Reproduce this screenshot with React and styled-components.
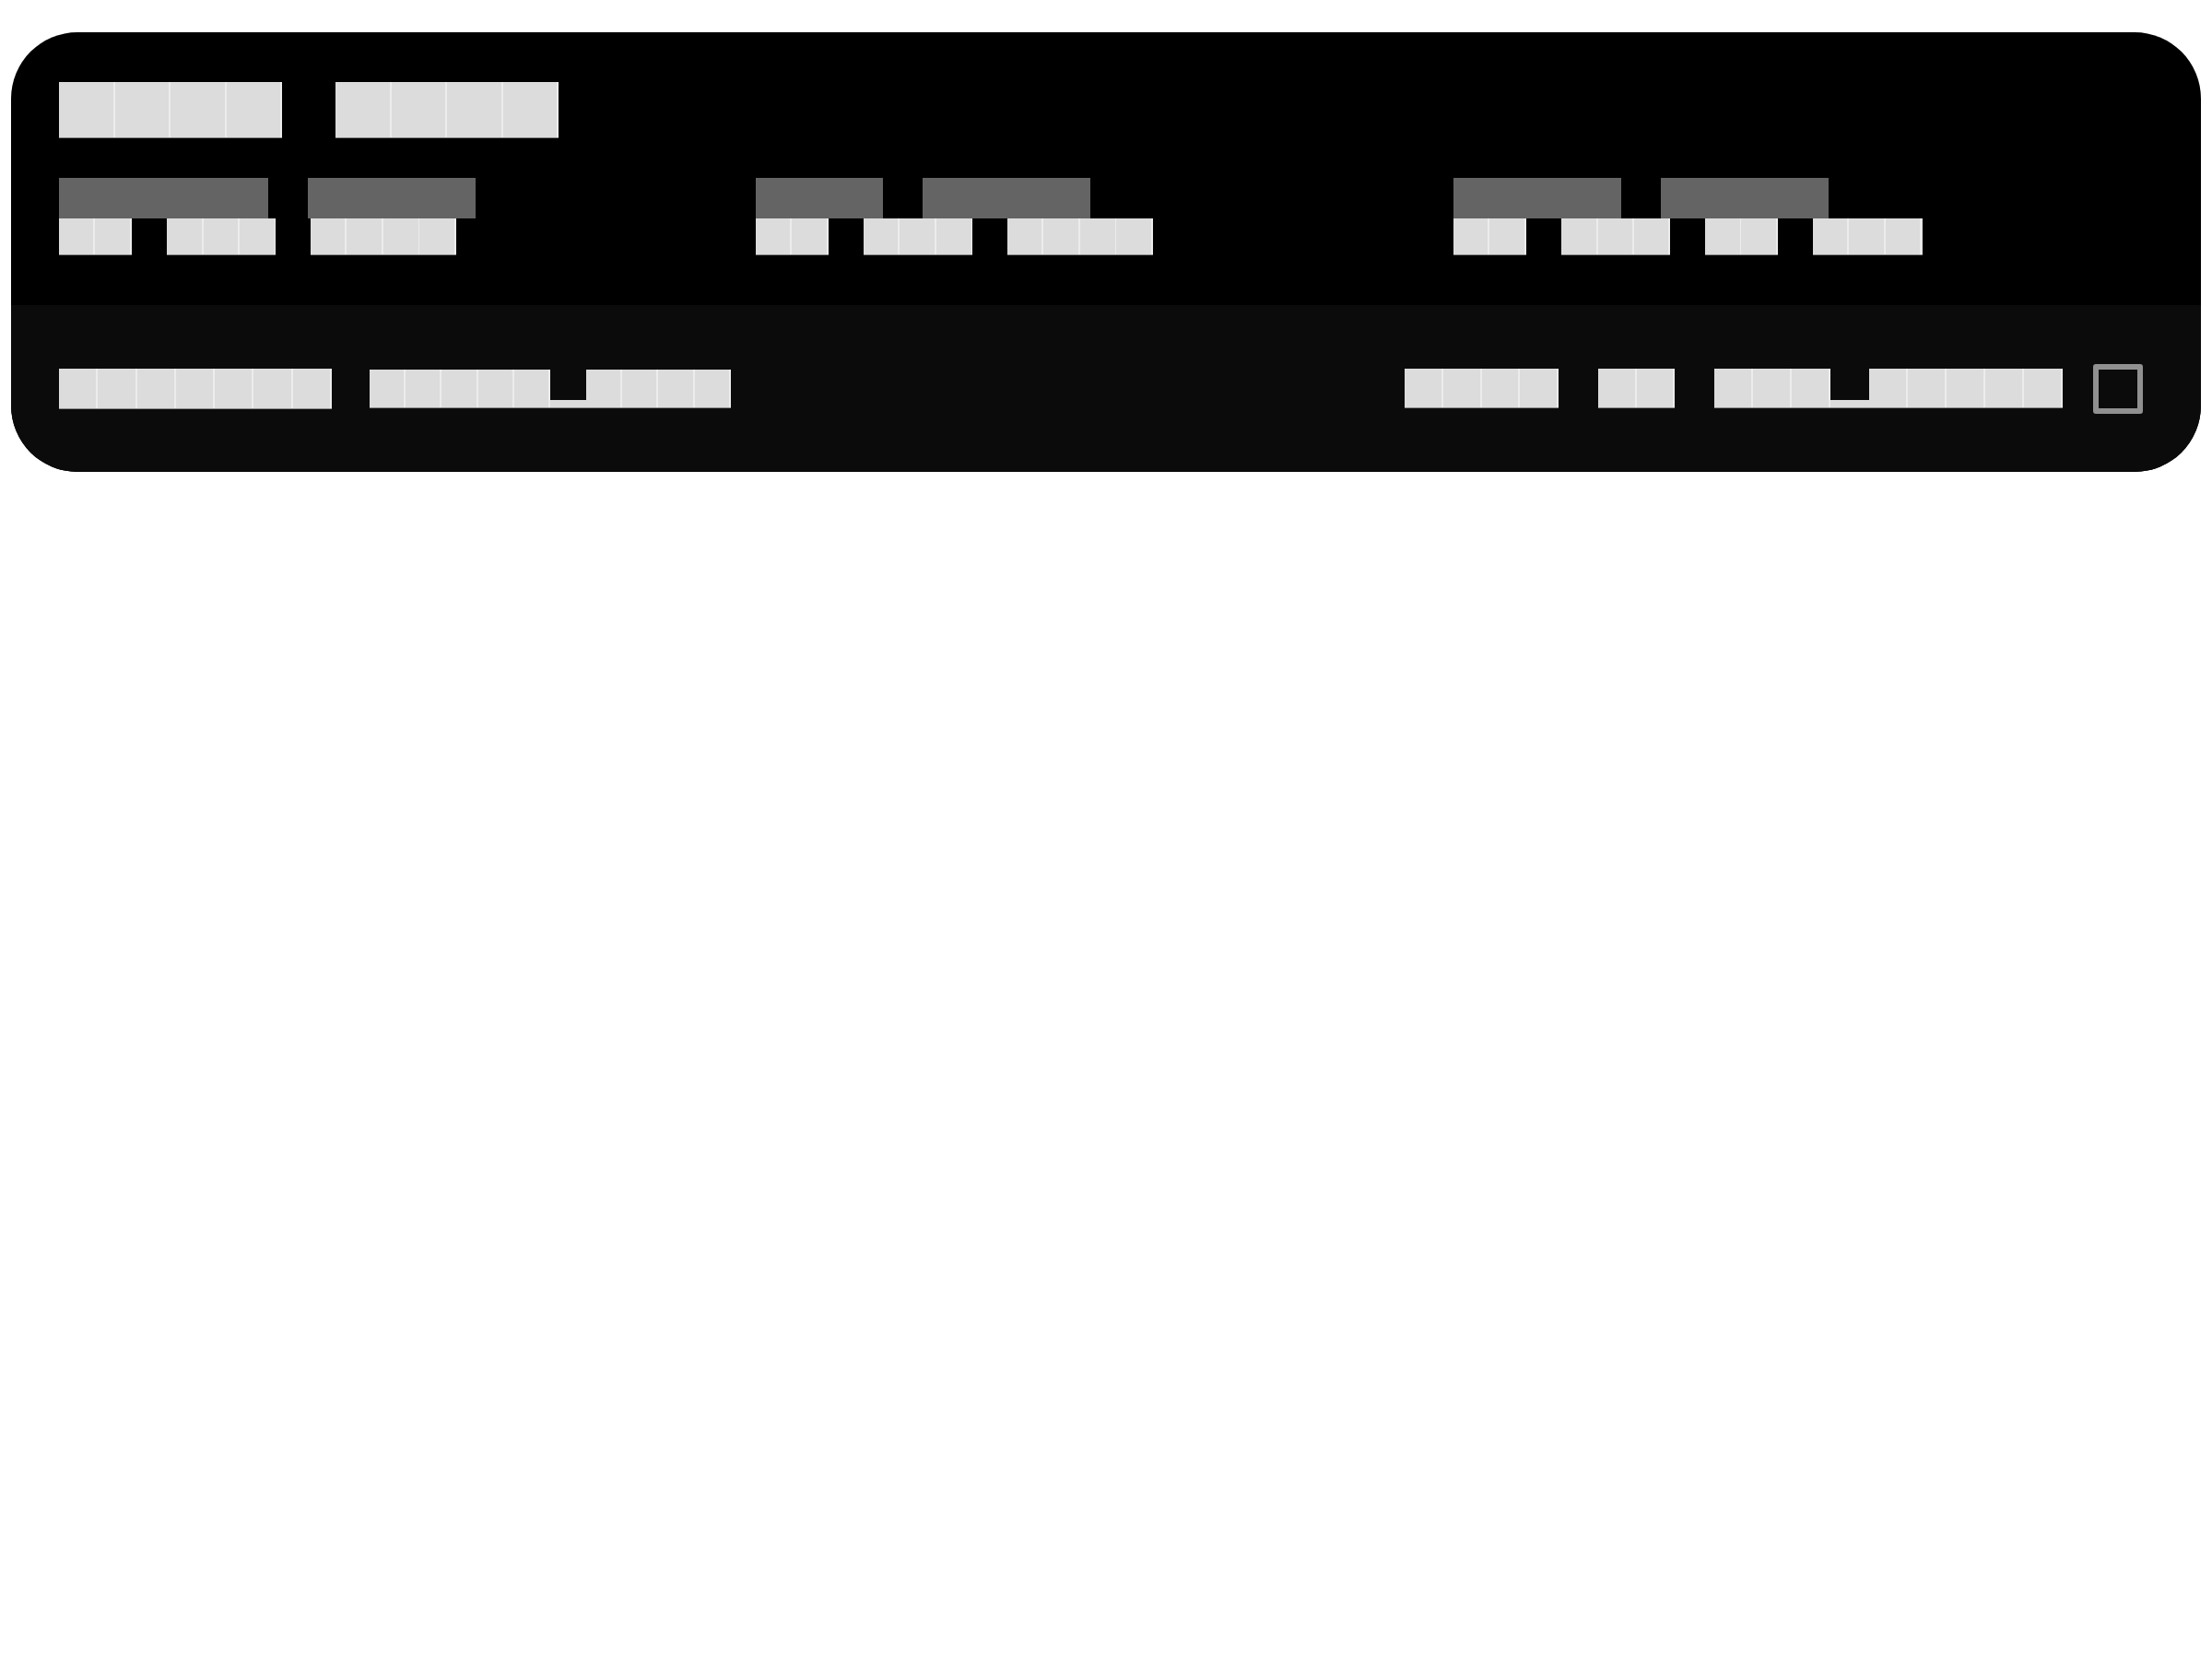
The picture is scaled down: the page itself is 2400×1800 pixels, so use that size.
import styled, { createGlobalStyle } from "styled-components";

const GlobalStyle = createGlobalStyle`
  * { box-sizing: border-box; }
  html, body { margin: 0; padding: 0; background: #fff; }
  body { font-family: "Noto Sans CJK SC", "Noto Sans", sans-serif; }
`;

const headings = ["关于我们", "联系我们"];

const groups = [
  { labels: [227, 182], links: ["首页", "新产品", "解决方案"] },
  { labels: [138, 182], links: ["招聘", "合作者", "投资关系"] },
  { labels: [182, 182], links: ["帮助", "退换货", "隐私", "网站图"] },
];

const Footer = () => {
  return (
    <Card>
      <Top>
        <HeadingRow>
          {headings.map((h) => (
            <Word key={h} $size={60.5} $height={61}>{h}</Word>
          ))}
        </HeadingRow>
        <Columns>
          {groups.map((g, i) => (
            <Group key={i}>
              <LabelRow>
                {g.labels.map((w, j) => (
                  <Label key={j} $width={w}>栏目</Label>
                ))}
              </LabelRow>
              <LinkRow>
                {g.links.map((l) => (
                  <Word as="a" key={l} $size={39.5} $height={40}>{l}</Word>
                ))}
              </LinkRow>
            </Group>
          ))}
        </Columns>
      </Top>
      <Bottom>
        <BottomSide>
          <Word $size={42.3} $height={44}>版权所有公司名</Word>
          <Phrase>
            <Word $size={39.2} $height={42}>沪公网安备</Word>
            <Gap $size={39.2} />
            <Word $size={39.2} $height={42}>号码编号</Word>
          </Phrase>
        </BottomSide>
        <BottomSide $right>
          <Word as="a" $size={41.8} $height={43}>使用条款</Word>
          <Word as="a" $size={41.6} $height={43}>隐私</Word>
          <Phrase>
            <Word $size={42} $height={43}>简体中</Word>
            <Gap $size={42} />
            <Word $size={42} $height={43}>文语言设置</Word>
          </Phrase>
          <IconButton aria-label="language" />
        </BottomSide>
      </Bottom>
    </Card>
  );
};

export default function App() {
  return (
    <>
      <GlobalStyle />
      <Footer />
    </>
  );
}

const Card = styled.footer`
  margin: 35px 12px 0;
  border-radius: 72px;
  overflow: hidden;
  background: #000;
`;

const Top = styled.div`
  padding: 54px 52px 54px;
  display: flex;
  flex-direction: column;
  gap: 43px;
`;

const HeadingRow = styled.div`
  display: flex;
  gap: 58px;
`;

// each glyph fills one cell: small font, letter-spacing pads it to the cell width
const Word = styled.span`
  display: inline-block;
  font-size: ${(p) => p.$size * 0.55}px;
  letter-spacing: ${(p) => p.$size * 0.45}px;
  height: ${(p) => p.$height}px;
  line-height: ${(p) => p.$height}px;
  white-space: nowrap;
  text-decoration: none;
  color: #dcdcdc;
  background-color: #dcdcdc;
  background-image: repeating-linear-gradient(
    to right,
    #dcdcdc 0,
    #dcdcdc ${(p) => p.$size - 2}px,
    #ececec ${(p) => p.$size - 2}px,
    #ececec ${(p) => p.$size}px
  );
  box-shadow: inset 0 -1px 0 #8a8a8a;
`;

const Columns = styled.div`
  display: grid;
  grid-template-columns: 756px 757px 1fr;
`;

const Group = styled.div`
  display: flex;
  flex-direction: column;
`;

const LabelRow = styled.div`
  display: flex;
  gap: 43px;
`;

const Label = styled.span`
  display: block;
  width: ${(p) => p.$width}px;
  height: 44px;
  font-size: 24px;
  line-height: 44px;
  color: #646464;
  background: #646464;
`;

const LinkRow = styled.div`
  display: flex;
  gap: 38px;
`;

const Bottom = styled.div`
  background: #0b0b0b;
  height: 181px;
  padding: 0 63px 0 52px;
  display: flex;
  align-items: center;
  justify-content: space-between;
`;

const BottomSide = styled.div`
  display: flex;
  align-items: center;
  gap: ${(p) => (p.$right ? 43 : 41)}px;
`;

const Phrase = styled.span`
  display: inline-flex;
  align-items: flex-end;
`;

const Gap = styled.span`
  display: inline-block;
  width: ${(p) => p.$size}px;
  height: 9px;
  background: #dcdcdc;
  box-shadow: inset 0 -1px 0 #8a8a8a;
`;

const IconButton = styled.button`
  width: 54px;
  height: 54px;
  margin-left: -10px;
  padding: 0;
  border: 6px solid #909090;
  border-radius: 3px;
  background: transparent;
`;
